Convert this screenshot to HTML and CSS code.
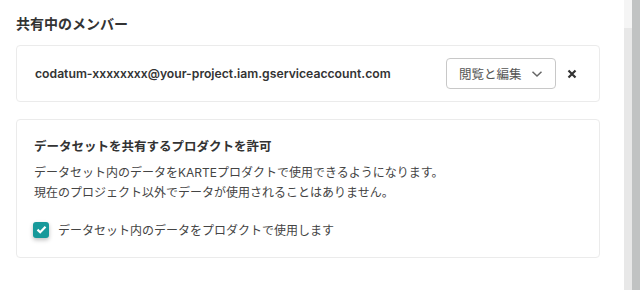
FILE: index.html
```html
<html lang="ja">
<head>
  <meta charset="UTF-8">
  <title>共有中のメンバー</title>
  <link rel="stylesheet" href="styles.css">
</head>
<body>
  <div class="page">
    <div class="main">
      <h2 class="heading">共有中のメンバー</h2>
      <div class="card member">
        <span class="email">codatum-xxxxxxxx@your-project.iam.gserviceaccount.com</span>
        <button class="select">閲覧と編集
          <svg width="12" height="8" viewBox="0 0 12 8"><path d="M1.5 1.8 6 6 10.5 1.8" fill="none" stroke="#666" stroke-width="1.5"/></svg>
        </button>
        <button class="remove">
          <svg width="10" height="10" viewBox="0 0 10 10"><path d="M1.5 1.5 8.5 8.5M8.5 1.5 1.5 8.5" stroke="#333" stroke-width="2.2"/></svg>
        </button>
      </div>
      <div class="card allow">
        <div class="allow-title">データセットを共有するプロダクトを許可</div>
        <p class="desc">データセット内のデータをKARTEプロダクトで使用できるようになります。<br>現在のプロジェクト以外でデータが使用されることはありません。</p>
        <label class="check">
          <span class="box"><svg width="11" height="9" viewBox="0 0 11 9"><path d="M1.5 4.6 4.2 7.2 9.5 1.8" fill="none" stroke="#fff" stroke-width="2.2"/></svg></span>
          データセット内のデータをプロダクトで使用します
        </label>
      </div>
    </div>
    <div class="side"></div>
    <div class="bar"></div>
  </div>
</body>
</html>
```
FILE: styles.css
```css
body {
  margin: 0;
  font-family: Inter, "Noto Sans CJK JP", sans-serif;
  color: #333;
  background: #fff;
}
.page { display: flex; height: 290px; }
.main { flex: 1; padding: 0 24px 0 16px; }
.heading {
  margin: 14px 0 11px;
  font-size: 14px;
  font-weight: bold;
  line-height: 20px;
  color: #333;
}
.card {
  border: 1px solid #ebebeb;
  border-radius: 4px;
  background: #fff;
}
.member {
  display: flex;
  align-items: center;
  height: 55px;
  padding: 0 22px 0 18px;
}
.email { flex: 1; font-size: 12.2px; font-weight: 600; }
.select {
  display: flex;
  align-items: center;
  justify-content: space-between;
  white-space: nowrap;
  box-sizing: border-box;
  height: 31px;
  width: 110px;
  padding: 0 12px 0 12px;
  border: 1px solid #c8c8c8;
  border-radius: 4px;
  background: #fff;
  font-family: inherit;
  font-size: 12.5px;
  color: #555;
}
.remove {
  display: flex;
  border: none;
  background: none;
  padding: 0;
  margin-left: 11px;
}
.allow { margin-top: 17px; padding: 18px 17px 19px; }
.allow-title { font-size: 12.5px; font-weight: bold; line-height: 18px; }
.desc {
  margin: 7px 0 0;
  font-size: 12px;
  line-height: 20px;
  color: #444;
}
.check {
  display: flex;
  align-items: center;
  gap: 9px;
  margin-top: 18px;
  font-size: 12px;
  color: #444;
}
.box {
  display: flex;
  align-items: center;
  justify-content: center;
  width: 16px;
  height: 16px;
  margin-left: -1px;
  border-radius: 3px;
  background: #17999a;
  box-shadow: 0 2px 4px rgba(0, 0, 0, 0.25);
}
.side { width: 8px; background: linear-gradient(#f5f5f5 28px, #e8e8e8 28px); }
.bar { width: 8px; background: #c1c3c3; }
```
